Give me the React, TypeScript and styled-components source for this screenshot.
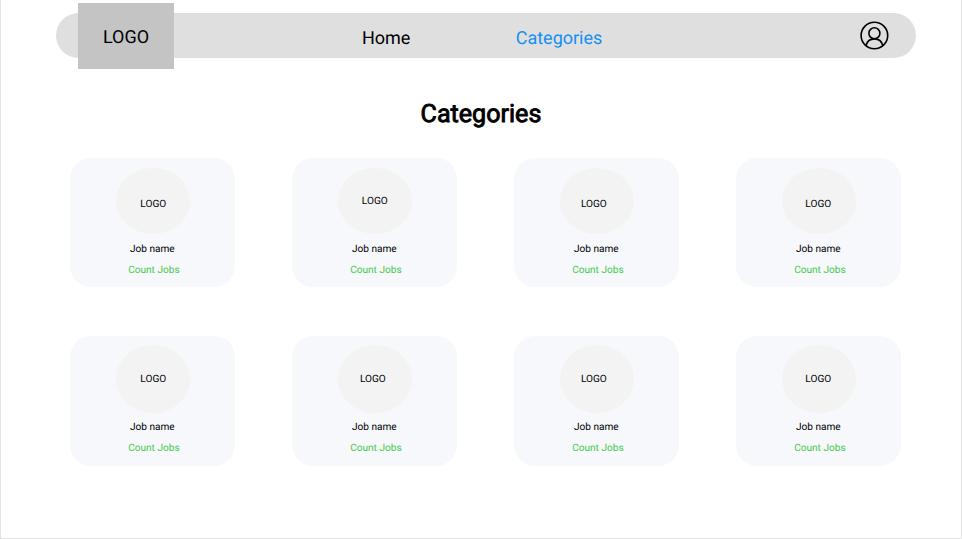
import React from "react";
import styled, { createGlobalStyle } from "styled-components";

const GlobalStyle = createGlobalStyle`
  * { box-sizing: border-box; }
  body {
    margin: 0;
    background: #fff;
    color: #000;
    font-family: Roboto, "Liberation Sans", sans-serif;
    text-rendering: geometricPrecision;
  }
`;

const Page = styled.div`
  width: 962px;
  height: 539px;
  padding-top: 3px;
  border: solid #e3e3e3;
  border-width: 0 1px 1px;
  overflow: hidden;
`;

const Header = styled.header`
  display: flex;
  align-items: center;
  width: 859.5px;
  height: 45.4px;
  margin: 10px 0 0 55.4px;
  padding: 0 27px 0 21.2px;
  border-radius: 23px;
  background: #dfdfdf;
`;

const Brand = styled.div`
  display: flex;
  align-items: center;
  justify-content: center;
  flex: none;
  width: 96px;
  height: 65.8px;
  background: #c4c4c4;
  font-size: 18px;
  line-height: 22px;
  padding: 4px 0 0 1px;
`;

const Nav = styled.nav`
  display: flex;
  gap: 105.3px;
  margin-left: 188.4px;
  padding-top: 6px;
`;

const NavLink = styled.a<{ $active?: boolean }>`
  color: ${({ $active }) => ($active ? "#1490f2" : "#000")};
  font-size: 18px;
  line-height: 22px;
  text-decoration: none;
`;

const Profile = styled.svg`
  flex: none;
  width: 29px;
  height: 29px;
  margin-left: auto;
`;

const Title = styled.h1`
  margin: 40.6px 0 0;
  font-size: 25.1px;
  font-weight: 400;
  line-height: 32px;
  text-align: center;
  -webkit-text-stroke: 0.9px #000;
`;

const Grid = styled.main`
  display: grid;
  grid-template-columns: repeat(4, 165px);
  grid-auto-rows: 129.5px;
  gap: 49px 57px;
  margin: 27px 0 0 69.4px;
`;

const Card = styled.article`
  display: flex;
  flex-direction: column;
  align-items: center;
  border-radius: 21px;
  background: #f7f8fc;
`;

const Emblem = styled.div<{ $tall: boolean }>`
  display: flex;
  justify-content: flex-start;
  align-items: flex-start;
  flex: none;
  width: 74px;
  height: ${({ $tall }) => ($tall ? 68 : 66.3)}px;
  margin: ${({ $tall }) => ($tall ? 8.5 : 10.2)}px 0 0 0.7px;
  border-radius: 50%;
  background: #f3f3f3;
`;

const EmblemText = styled.span<{ $left: number; $top: number }>`
  margin: ${({ $top }) => $top}px 0 0 ${({ $left }) => $left}px;
  font-size: 10.1px;
  line-height: 12px;
`;

const JobName = styled.div`
  margin: 9.5px 1.2px 0 0;
  font-size: 10.1px;
  line-height: 12px;
`;

const JobCount = styled.div`
  margin: 9px 0 0 2px;
  color: #45cb4b;
  font-size: 10.1px;
  line-height: 12px;
`;

const categories = [
  { left: 24.1, top: 31, tall: false },
  { left: 23.6, top: 28, tall: false },
  { left: 20.7, top: 31, tall: false },
  { left: 23.1, top: 31, tall: false },
  { left: 24.1, top: 29.5, tall: true },
  { left: 21.7, top: 29.5, tall: true },
  { left: 20.7, top: 29.5, tall: true },
  { left: 23.1, top: 29.5, tall: true },
];

export default function App() {
  return (
    <>
      <GlobalStyle />
      <Page>
        <Header>
          <Brand>LOGO</Brand>
          <Nav>
            <NavLink>Home</NavLink>
            <NavLink $active>Categories</NavLink>
          </Nav>
          <Profile viewBox="0 0 29 29" fill="none" stroke="#000" strokeWidth="1.6">
            <circle cx="14.4" cy="14.5" r="13.3" />
            <circle cx="14.4" cy="12.3" r="5.5" />
            <path d="M6 24.6C7 20.5 10 17.9 14.4 17.9s7.4 2.6 8.4 6.7" />
          </Profile>
        </Header>
        <Title>Categories</Title>
        <Grid>
          {categories.map(({ left, top, tall }, index) => (
            <Card key={index}>
              <Emblem $tall={tall}>
                <EmblemText $left={left} $top={top}>LOGO</EmblemText>
              </Emblem>
              <JobName>Job name</JobName>
              <JobCount>Count Jobs</JobCount>
            </Card>
          ))}
        </Grid>
      </Page>
    </>
  );
}
